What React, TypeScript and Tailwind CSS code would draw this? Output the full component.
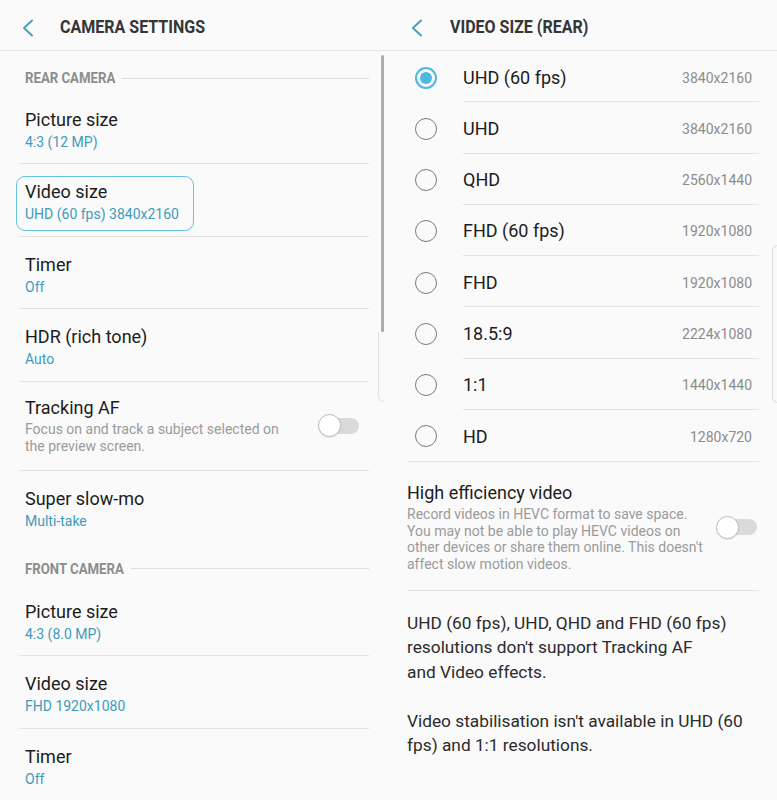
import React from "react";

const TEAL_TEXT = "text-[#3f9bba]";

function Chevron() {
  return (
    <svg width="14" height="20" viewBox="0 0 14 20" fill="none">
      <path d="M11 2.5 L3 10 L11 17.5" stroke="#4a9fbb" strokeWidth="2" strokeLinecap="round" strokeLinejoin="round" />
    </svg>
  );
}

function Toggle() {
  return (
    <div className="relative w-[41px] h-[23px] shrink-0">
      <div className="absolute right-0 top-[3.5px] w-[38px] h-[16px] rounded-full bg-[#dadada]" />
      <div className="absolute left-0 top-0 w-[23px] h-[23px] rounded-full bg-white border border-[#bcbcbc] shadow-[0_1px_1px_rgba(0,0,0,0.08)]" />
    </div>
  );
}

function SectionHeader({ label, w, pt }: { label: string; w: string; pt: string }) {
  return (
    <div className={`h-[40.5px] ${pt} pl-[6px]`}>
      <div className="flex items-center h-[18px]">
        <div className={`${w} shrink-0 whitespace-nowrap`}>
          <span className="inline-block origin-left scale-x-[0.88] text-[15px] leading-[18px] font-bold text-[#8d8d8d]">
            {label}
          </span>
        </div>
        <div className="flex-1 h-px bg-[#dedede]" />
      </div>
    </div>
  );
}

function Item({ title, sub, border = true, focus = false }: { title: string; sub: string; border?: boolean; focus?: boolean }) {
  return (
    <div className={`relative h-[72.5px] pl-[6px] pt-[17px] flex flex-col ${border ? "border-b border-[#e4e4e4]" : ""}`}>
      {focus && (
        <div className="absolute left-[-3px] top-[11.5px] w-[178px] h-[55px] rounded-[9px] border-[1.5px] border-[#62c3e2]" />
      )}
      <div className="text-[18px] leading-[22px] text-[#1c1c1c]">{title}</div>
      <div className={`mt-[2px] text-[14px] leading-[18px] ${TEAL_TEXT}`}>{sub}</div>
    </div>
  );
}

function Radio({ selected }: { selected?: boolean }) {
  if (selected) {
    return (
      <div className="w-[22px] h-[22px] rounded-full border-[2.5px] border-[#4db8e4] flex items-center justify-center">
        <div className="w-[12px] h-[12px] rounded-full bg-[#4db8e4]" />
      </div>
    );
  }
  return <div className="w-[22px] h-[22px] rounded-full border-[1.5px] border-[#7a7a7a]" />;
}

const sizes = [
  { name: "UHD (60 fps)", res: "3840x2160", selected: true },
  { name: "UHD", res: "3840x2160" },
  { name: "QHD", res: "2560x1440" },
  { name: "FHD (60 fps)", res: "1920x1080" },
  { name: "FHD", res: "1920x1080" },
  { name: "18.5:9", res: "2224x1080" },
  { name: "1:1", res: "1440x1440" },
  { name: "HD", res: "1280x720" },
];

export default function App() {
  return (
    <div
      className="relative w-[777px] h-[800px] overflow-hidden bg-[#fafafa] flex"
      style={{ fontFamily: "Roboto, 'Noto Sans', sans-serif" }}
    >
      {/* Left panel */}
      <div className="relative w-[385px] shrink-0">
        <div className="h-[51px] pt-[6px] border-b border-[#e6e6e6] flex items-center">
          <div className="ml-[21px] w-[14px] flex items-center">
            <Chevron />
          </div>
          <div className="ml-[25px] whitespace-nowrap">
            <span className="inline-block origin-left scale-x-[0.89] text-[18px] leading-[22px] font-bold text-[#353535]">
              CAMERA SETTINGS
            </span>
          </div>
        </div>
        <div className="pl-[19px] pr-[16px]">
          <SectionHeader label="REAR CAMERA" w="w-[97px]" pt="pt-[18px]" />
          <Item title="Picture size" sub="4:3 (12 MP)" />
          <Item title="Video size" sub="UHD (60 fps) 3840x2160" focus />
          <Item title="Timer" sub="Off" />
          <Item title="HDR (rich tone)" sub="Auto" />
          <div className="h-[89px] border-b border-[#e4e4e4] pl-[6px] flex items-center">
            <div className="flex-1 flex flex-col pt-[1px]">
              <div className="text-[18px] leading-[22px] text-[#1c1c1c]">Tracking AF</div>
              <div className="mt-[2px] text-[14px] leading-[17px] text-[#9b9b9b]">
                Focus on and track a subject selected on
                <br />
                the preview screen.
              </div>
            </div>
            <div className="mr-[10px]">
              <Toggle />
            </div>
          </div>
          <Item title="Super slow-mo" sub="Multi-take" border={false} />
          <SectionHeader label="FRONT CAMERA" w="w-[106px]" pt="pt-[16.5px]" />
          <Item title="Picture size" sub="4:3 (8.0 MP)" />
          <Item title="Video size" sub="FHD 1920x1080" />
          <Item title="Timer" sub="Off" border={false} />
        </div>
        <div className="absolute right-[1px] top-[55px] w-[3px] h-[277px] rounded-full bg-[#ababab]" />
        <div className="absolute right-[1px] top-[332px] w-[6px] h-[70px] border-l border-b border-[#e2e2e2] rounded-bl-[6px]" />
      </div>

      {/* Right panel */}
      <div className="flex-1 min-w-0">
        <div className="h-[51px] pt-[6px] border-b border-[#e6e6e6] flex items-center">
          <div className="ml-[25px] w-[14px] flex items-center">
            <Chevron />
          </div>
          <div className="ml-[26px] whitespace-nowrap">
            <span className="inline-block origin-left scale-x-[0.89] text-[18px] leading-[22px] font-bold text-[#353535]">
              VIDEO SIZE (REAR)
            </span>
          </div>
        </div>
        <div className="flex flex-col">
          {sizes.map((s, i) => (
            <div key={s.name} className="flex h-[51.25px]">
              <div className="w-[78px] shrink-0 pl-[30px] pt-[2px] flex items-center">
                <Radio selected={s.selected} />
              </div>
              <div
                className={`flex-1 mr-[18px] pr-[7px] pt-[3px] flex items-center justify-between ${
                  i < sizes.length - 1 ? "border-b border-[#e4e4e4]" : ""
                }`}
              >
                <span className="text-[18px] leading-[22px] text-[#1c1c1c]">{s.name}</span>
                <span className="text-[14px] leading-[18px] text-[#8c8c8c]">{s.res}</span>
              </div>
            </div>
          ))}
        </div>
        <div className="ml-[23px] mr-[18px] h-px bg-[#e4e4e4]" />
        <div className="pl-[22px] pr-[20px] pt-[20px] pb-[17px] flex items-center">
          <div className="flex-1 flex flex-col">
            <div className="text-[18px] leading-[22px] text-[#1c1c1c]">High efficiency video</div>
            <div className="mt-[2px] text-[14px] leading-[16.7px] text-[#9b9b9b]">
              Record videos in HEVC format to save space.
              <br />
              You may not be able to play HEVC videos on
              <br />
              other devices or share them online. This doesn't
              <br />
              affect slow motion videos.
            </div>
          </div>
          <Toggle />
        </div>
        <div className="ml-[23px] mr-[18px] h-px bg-[#e4e4e4]" />
        <div className="pl-[22px] pr-[18px] pt-[20px] text-[17.3px] leading-[24.5px] text-[#2b2b2b]">
          <p>
            UHD (60 fps), UHD, QHD and FHD (60 fps)
            <br />
            resolutions don't support Tracking AF
            <br />
            and Video effects.
          </p>
          <p className="mt-[24.5px]">
            Video stabilisation isn't available in UHD (60
            <br />
            fps) and 1:1 resolutions.
          </p>
        </div>
      </div>
      <div className="absolute left-[772px] top-[245px] w-[8px] h-[158px] border-l border-t border-b border-[#e0e0e0] rounded-l-[6px]" />
    </div>
  );
}
